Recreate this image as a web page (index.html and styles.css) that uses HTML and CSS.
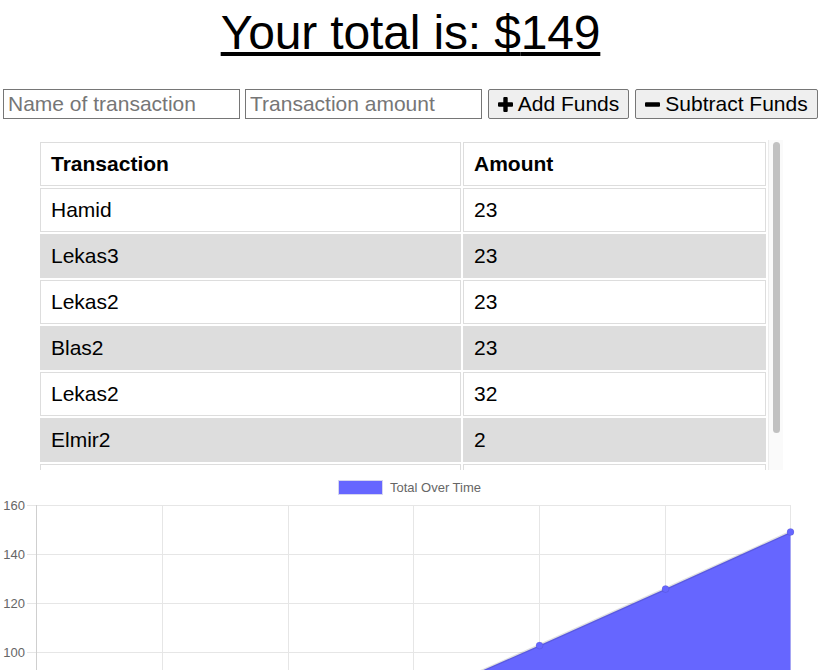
FILE: index.html
```html
<!DOCTYPE html>
<html lang="en">
<head>
<meta charset="utf-8">
<title>Budget Tracker</title>
<link rel="stylesheet" href="styles.css">
</head>
<body>
<h1 class="total">Your total is: $<span class="total-num">149</span></h1>
<div class="form">
  <input class="field" type="text" placeholder="Name of transaction">
  <input class="field" type="number" placeholder="Transaction amount">
  <button class="btn btn-add"><svg class="ico" viewBox="0 0 15 15" width="15" height="15"><rect x="5.3" y="0" width="4.4" height="15" rx="1"/><rect x="0" y="5.3" width="15" height="4.4" rx="1"/></svg>Add Funds</button>
  <button class="btn btn-sub"><svg class="ico" viewBox="0 0 15 15" width="15" height="15"><rect x="0" y="5.3" width="15" height="4.4" rx="1"/></svg>Subtract Funds</button>
</div>
<div class="table-wrap">
  <div class="table-view">
    <table class="tx">
      <thead>
        <tr><th class="c-name">Transaction</th><th>Amount</th></tr>
      </thead>
      <tbody>
        <tr><td>Hamid</td><td>23</td></tr>
        <tr><td>Lekas3</td><td>23</td></tr>
        <tr><td>Lekas2</td><td>23</td></tr>
        <tr><td>Blas2</td><td>23</td></tr>
        <tr><td>Lekas2</td><td>32</td></tr>
        <tr><td>Elmir2</td><td>2</td></tr>
        <tr class="row-partial"><td></td><td></td></tr>
      </tbody>
    </table>
  </div>
  <div class="scroll-track"><div class="scroll-thumb"></div></div>
</div>
<div class="chart">
  <svg class="chart-svg" width="829" height="200" viewBox="0 470 829 200">
    <rect x="338.5" y="480.5" width="44" height="14" fill="#6666ff" stroke="#d6d6ef" stroke-width="1"/>
    <text class="legend" x="390" y="492">Total Over Time</text>
    <g stroke="#e6e6e6" stroke-width="1">
      <line x1="27" y1="505.5" x2="791" y2="505.5"/>
      <line x1="27" y1="554.5" x2="791" y2="554.5"/>
      <line x1="27" y1="603.5" x2="791" y2="603.5"/>
      <line x1="27" y1="652.5" x2="791" y2="652.5"/>
      <line x1="162.5" y1="505" x2="162.5" y2="680"/>
      <line x1="288.5" y1="505" x2="288.5" y2="680"/>
      <line x1="413.5" y1="505" x2="413.5" y2="680"/>
      <line x1="539.5" y1="505" x2="539.5" y2="680"/>
      <line x1="665.5" y1="505" x2="665.5" y2="680"/>
      <line x1="790.5" y1="505" x2="790.5" y2="680"/>
    </g>
    <line x1="36.5" y1="505" x2="36.5" y2="680" stroke="#cfcfcf" stroke-width="1"/>
    <g class="ylab">
      <text x="25" y="509.5">160</text>
      <text x="25" y="558.5">140</text>
      <text x="25" y="607.5">120</text>
      <text x="25" y="656.5">100</text>
    </g>
    <polygon points="413,701 539,645.5 665,589 790.5,532 790.5,900 413,900" fill="#6666ff"/>
    <polyline points="413,701 539,645.5 665,589 790.5,532" fill="none" stroke="rgba(0,0,0,0.12)" stroke-width="2.5"/>
    <g fill="#6666ff" stroke="rgba(0,0,0,0.08)" stroke-width="1">
      <circle cx="539.5" cy="645.5" r="3.5"/>
      <circle cx="665.5" cy="589" r="3.5"/>
      <circle cx="790.5" cy="532" r="3.5"/>
    </g>
  </svg>
</div>
</body>
</html>
```

FILE: styles.css
```css
html, body {
  margin: 0;
  padding: 0;
  background: #fff;
}
body {
  font-family: "Liberation Sans", Arial, sans-serif;
  color: #000;
}
.total {
  margin: 5px 0 0;
  padding-right: 8px;
  font-size: 48px;
  line-height: 56px;
  font-weight: normal;
  text-align: center;
  text-decoration: underline;
  letter-spacing: -0.15px;
}
.form {
  display: flex;
  align-items: center;
  margin-top: 28px;
  padding-left: 3px;
}
.field {
  box-sizing: border-box;
  width: 237px;
  height: 30px;
  margin: 0 5px 0 0;
  padding: 0 4px;
  border: 1px solid #767676;
  border-radius: 0;
  font-family: "Liberation Sans", Arial, sans-serif;
  font-size: 21px;
  color: #000;
  background: #fff;
  -moz-appearance: textfield;
}
.field::-webkit-outer-spin-button,
.field::-webkit-inner-spin-button {
  -webkit-appearance: none;
  margin: 0;
}
.field::placeholder {
  color: #767676;
}
.field + .field {
  margin-right: 6px;
}
.btn {
  box-sizing: border-box;
  display: flex;
  align-items: center;
  justify-content: center;
  height: 30px;
  margin: 0 6px 0 0;
  padding: 0;
  border: 1px solid #767676;
  border-radius: 2px;
  background: #efefef;
  font-family: "Liberation Sans", Arial, sans-serif;
  font-size: 21px;
  color: #000;
}
.btn-add {
  width: 141px;
}
.btn-sub {
  width: 183px;
}
.ico {
  fill: #000;
  margin-right: 5px;
  flex: none;
}
.table-wrap {
  display: flex;
  width: 745px;
  height: 330px;
  margin: 21px 0 0 38px;
}
.table-view {
  width: 730px;
  height: 330px;
  overflow: hidden;
}
.scroll-track {
  box-sizing: border-box;
  width: 15px;
  height: 330px;
  padding: 2px 3px 0 4px;
  background: #fafafa;
  border-left: 1px solid #ececec;
}
.scroll-thumb {
  height: 291px;
  border-radius: 4px;
  background: #c1c1c1;
}
.tx {
  width: 730px;
  table-layout: fixed;
  border-collapse: separate;
  border-spacing: 2px;
  font-size: 21px;
}
.tx th,
.tx td {
  box-sizing: border-box;
  padding: 10px 10px;
  line-height: 22px;
  height: 44px;
  border: 1px solid #ddd;
  text-align: left;
}
.tx th {
  font-weight: bold;
}
.tx .c-name {
  width: 421px;
}
.tx tbody tr:nth-child(even) td {
  background: #ddd;
}
.chart {
  height: 200px;
  overflow: hidden;
}
.chart-svg {
  display: block;
}
.legend {
  font-family: "Liberation Sans", Arial, sans-serif;
  font-size: 13px;
  fill: #666;
}
.ylab text {
  font-family: "Liberation Sans", Arial, sans-serif;
  font-size: 13px;
  fill: #666;
  text-anchor: end;
}
```
